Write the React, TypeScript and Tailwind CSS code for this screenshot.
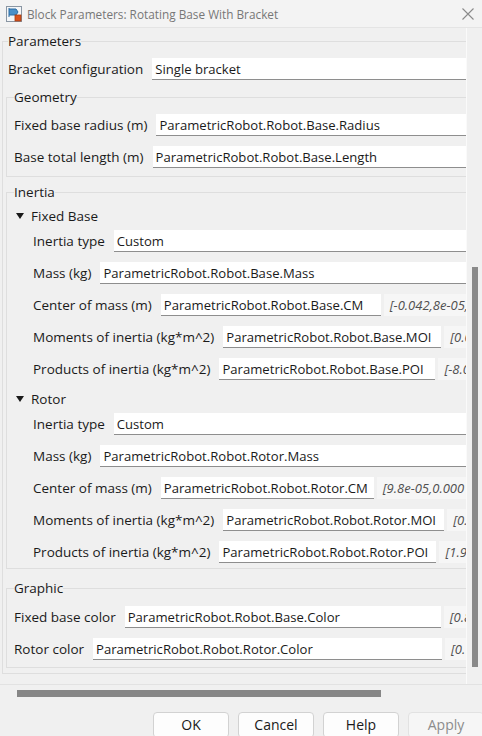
import React from "react";

function Field({ value, w }: { value: string; w?: string }) {
  return (
    <div
      className={`${w ?? "flex-1"} h-[22px] shrink-0 bg-white border-b border-[#8e8e8e] pl-[3px] flex items-center whitespace-nowrap overflow-hidden text-[13.1px]`}
    >
      {value}
    </div>
  );
}

function Val({ text }: { text: string }) {
  return (
    <div className="h-[22px] shrink-0 ml-[3px] pl-[6px] pr-2 bg-[#f6f6f6] flex items-center italic text-[13px] text-[#505050] whitespace-nowrap">
      {text}
    </div>
  );
}

function Row({ label, value, w, extra }: { label: string; value: string; w?: string; extra?: string }) {
  return (
    <div className="flex items-center h-[22px]">
      <span className="shrink-0 whitespace-nowrap mr-[9px]">{label}</span>
      <Field value={value} w={w} />
      {extra && <Val text={extra} />}
    </div>
  );
}

function Tree({ label }: { label: string }) {
  return (
    <div className="flex items-center h-[22px] ml-[2px] gap-[7px]">
      <svg width="8" height="6" viewBox="0 0 8 6">
        <path d="M0 0 H8 L4 6 Z" fill="#1a1a1a" />
      </svg>
      <span>{label}</span>
    </div>
  );
}

function BlockIcon() {
  return (
    <svg width="16" height="16" viewBox="0 0 16 16">
      <rect x="0.5" y="0.5" width="15" height="15" fill="#f4f6f8" stroke="#8a96a3" />
      <path d="M3 2 L3 11 M3 3 L10 3 L12 6 L10 9 L3 9" fill="#4a90c8" stroke="#2d6da3" strokeWidth="1" />
      <rect x="9" y="9" width="6" height="6" fill="#d9531e" stroke="#a53d12" strokeWidth="0.8" />
    </svg>
  );
}

export default function App() {
  return (
    <div className="w-[482px] h-[736px] bg-[#f0f0f0] flex flex-col overflow-hidden font-['Open_Sans',sans-serif] text-[13.5px] leading-[18px] text-[#1a1a1a]">
      {/* title bar */}
      <div className="h-[28px] shrink-0 flex items-center bg-[#f3f3f3] border-b border-[#e4e4e4]">
        <div className="ml-[6px] mr-[5px] flex">
          <BlockIcon />
        </div>
        <span className="text-[11.8px] text-[#777] whitespace-nowrap">Block Parameters: Rotating Base With Bracket</span>
        <svg className="ml-auto mr-[8px]" width="12" height="12" viewBox="0 0 12 12">
          <path d="M0.5 0.5 L11.5 11.5 M11.5 0.5 L0.5 11.5" stroke="#8a8a8a" strokeWidth="1.1" />
        </svg>
      </div>

      {/* scroll area */}
      <div className="flex h-[657px] shrink-0 border-b border-[#e2e2e2]">
        <div className="w-[467px] h-full overflow-hidden border-r border-[#fafafa]">
          <div className="w-[640px] pt-[4px]">
            <fieldset className="ml-[2px] border border-[#dedede] pl-[5px] pb-[5px]">
              <legend className="leading-[18px]">Parameters</legend>
              <div className="pt-[8px] w-[520px]">
                <Row label="Bracket configuration" value="Single bracket" />
              </div>

              <fieldset className="-ml-[2px] mt-[8px] border border-[#dedede] pl-[7px] pb-[8px]">
                <legend>Geometry</legend>
                <div className="pt-[8px] w-[510px] flex flex-col gap-[10px]">
                  <Row label="Fixed base radius (m)" value="ParametricRobot.Robot.Base.Radius" />
                  <Row label="Base total length (m)" value="ParametricRobot.Robot.Base.Length" />
                </div>
              </fieldset>

              <fieldset className="-ml-[2px] mt-[6px] border border-[#dedede] pl-[7px] pb-[5px]">
                <legend>Inertia</legend>
                <div className="pt-[4px] w-[510px]">
                  <Tree label="Fixed Base" />
                  <div className="pl-[19px] pt-[3px] flex flex-col gap-[10px]">
                    <Row label="Inertia type" value="Custom" />
                    <Row label="Mass (kg)" value="ParametricRobot.Robot.Base.Mass" />
                    <Row label="Center of mass (m)" value="ParametricRobot.Robot.Base.CM" w="w-[220px]" extra="[-0.042,8e-05,0.0315]" />
                    <Row label="Moments of inertia (kg*m^2)" value="ParametricRobot.Robot.Base.MOI" w="w-[218px]" extra="[0.0021,0.0023,0.0017]" />
                    <Row label="Products of inertia (kg*m^2)" value="ParametricRobot.Robot.Base.POI" w="w-[216px]" extra="[-8.0e-07,1.2e-05,3e-08]" />
                  </div>
                  <div className="pt-[8px]">
                    <Tree label="Rotor" />
                  </div>
                  <div className="pl-[19px] pt-[3px] flex flex-col gap-[10px]">
                    <Row label="Inertia type" value="Custom" />
                    <Row label="Mass (kg)" value="ParametricRobot.Robot.Rotor.Mass" />
                    <Row label="Center of mass (m)" value="ParametricRobot.Robot.Rotor.CM" w="w-[213px]" extra="[9.8e-05,0.000123,0.0412]" />
                    <Row label="Moments of inertia (kg*m^2)" value="ParametricRobot.Robot.Rotor.MOI" w="w-[221px]" extra="[0.0011,0.0012,0.0009]" />
                    <Row label="Products of inertia (kg*m^2)" value="ParametricRobot.Robot.Rotor.POI" w="w-[217px]" extra="[1.9e-06,2.1e-07,4e-08]" />
                  </div>
                </div>
              </fieldset>

              <fieldset className="-ml-[2px] mt-[10px] border border-[#dedede] pl-[7px] pb-[7px]">
                <legend>Graphic</legend>
                <div className="pt-[9px] w-[510px] flex flex-col gap-[10px]">
                  <Row label="Fixed base color" value="ParametricRobot.Robot.Base.Color" w="w-[316px]" extra="[0.8,0.8,0.8]" />
                  <Row label="Rotor color" value="ParametricRobot.Robot.Rotor.Color" w="w-[349px]" extra="[0.7,0.7,0.7]" />
                </div>
              </fieldset>
            </fieldset>
          </div>
        </div>
        {/* vertical scrollbar */}
        <div className="flex-1 pl-[5px]">
          <div className="mt-[239px] w-[6px] h-[400px] bg-[#8a8a8a]" />
        </div>
      </div>

      {/* horizontal scrollbar */}
      <div className="h-[27px] shrink-0 pl-[17px] pt-[5px]">
        <div className="w-[364px] h-[7px] bg-[#868686]" />
      </div>

      {/* buttons */}
      <div className="flex gap-[9px] pl-[153px] text-[14px]">
        <button className="w-[76px] h-[26px] shrink-0 rounded-[4px] border border-[#d2d2d2] bg-[#fdfdfd]">OK</button>
        <button className="w-[76px] h-[26px] shrink-0 rounded-[4px] border border-[#d2d2d2] bg-[#fdfdfd]">Cancel</button>
        <button className="w-[76px] h-[26px] shrink-0 rounded-[4px] border border-[#d2d2d2] bg-[#fdfdfd]">Help</button>
        <button className="w-[76px] h-[26px] shrink-0 rounded-[4px] border border-[#e2e2e2] bg-[#f6f6f6] text-[#8c8c8c]">Apply</button>
      </div>
    </div>
  );
}
